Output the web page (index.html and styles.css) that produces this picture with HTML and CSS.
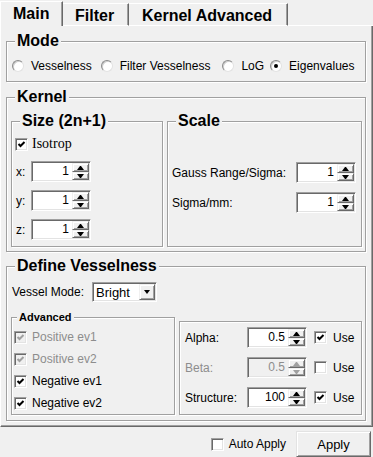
FILE: index.html
```html
<!DOCTYPE html>
<html>
<head>
<meta charset="utf-8">
<link rel="stylesheet" href="styles.css">
</head>
<body>
<div class="tabs">
  <div class="tab active t-main">Main</div>
  <div class="tab t-filter">Filter</div>
  <div class="tab t-kernel">Kernel Advanced</div>
  <div class="tab-fill"></div>
</div>
<div class="pane">
  <div class="group g-mode">
    <div class="gtitle">Mode</div>
    <div class="radios">
      <div class="opt o1"><span class="rb"></span>Vesselness</div>
      <div class="opt o2"><span class="rb"></span>Filter Vesselness</div>
      <div class="opt o3"><span class="rb"></span>LoG</div>
      <div class="opt o4"><span class="rb on"></span>Eigenvalues</div>
    </div>
  </div>

  <div class="group g-kernel">
    <div class="gtitle">Kernel</div>
    <div class="kernel-row">
      <div class="group g-size">
        <div class="gtitle">Size (2n+1)</div>
        <div class="iso-row">
          <span class="cb"><svg width="9" height="9" viewBox="0 0 9 9"><polyline points="1.5,4 3.5,6 7.5,2" fill="none" stroke="#000" stroke-width="2"/></svg></span>
          <span class="serif">Isotrop</span>
        </div>
        <div class="srow first"><span class="xl">x:</span><div class="spin"><span class="val">1</span><span class="btns"><span class="sb up"></span><span class="sb dn"></span></span></div></div>
        <div class="srow"><span class="xl">y:</span><div class="spin"><span class="val">1</span><span class="btns"><span class="sb up"></span><span class="sb dn"></span></span></div></div>
        <div class="srow"><span class="xl">z:</span><div class="spin"><span class="val">1</span><span class="btns"><span class="sb up"></span><span class="sb dn"></span></span></div></div>
      </div>
      <div class="group g-scale">
        <div class="gtitle">Scale</div>
        <div class="scrow first"><span>Gauss Range/Sigma:</span><div class="spin"><span class="val">1</span><span class="btns"><span class="sb up"></span><span class="sb dn"></span></span></div></div>
        <div class="scrow"><span>Sigma/mm:</span><div class="spin"><span class="val">1</span><span class="btns"><span class="sb up"></span><span class="sb dn"></span></span></div></div>
      </div>
    </div>
  </div>

  <div class="group g-vessel">
    <div class="gtitle">Define Vesselness</div>
    <div class="vm-row">
      <span class="vm-label">Vessel Mode:</span>
      <div class="combo"><span class="ctext">Bright</span><span class="cbtn"><span class="tri-dn"></span></span></div>
    </div>
    <div class="vrow">
      <div class="group g-adv">
        <div class="gtitle small">Advanced</div>
        <div class="crow first"><span class="cb dis"><svg width="9" height="9" viewBox="0 0 9 9"><polyline points="1.5,4 3.5,6 7.5,2" fill="none" stroke="#a0a0a0" stroke-width="2"/></svg></span><span class="dtext">Positive ev1</span></div>
        <div class="crow"><span class="cb dis"><svg width="9" height="9" viewBox="0 0 9 9"><polyline points="1.5,4 3.5,6 7.5,2" fill="none" stroke="#a0a0a0" stroke-width="2"/></svg></span><span class="dtext">Positive ev2</span></div>
        <div class="crow"><span class="cb"><svg width="9" height="9" viewBox="0 0 9 9"><polyline points="1.5,4 3.5,6 7.5,2" fill="none" stroke="#000" stroke-width="2"/></svg></span><span>Negative ev1</span></div>
        <div class="crow"><span class="cb"><svg width="9" height="9" viewBox="0 0 9 9"><polyline points="1.5,4 3.5,6 7.5,2" fill="none" stroke="#000" stroke-width="2"/></svg></span><span>Negative ev2</span></div>
      </div>
      <div class="group g-params">
        <div class="prow first">
          <span class="plabel">Alpha:</span>
          <div class="spin"><span class="val">0.5</span><span class="btns"><span class="sb up"></span><span class="sb dn"></span></span></div>
          <span class="cb use"><svg width="9" height="9" viewBox="0 0 9 9"><polyline points="1.5,4 3.5,6 7.5,2" fill="none" stroke="#000" stroke-width="2"/></svg></span><span class="utext">Use</span>
        </div>
        <div class="prow">
          <span class="plabel dtext">Beta:</span>
          <div class="spin dis"><span class="val">0.5</span><span class="btns"><span class="sb up"></span><span class="sb dn"></span></span></div>
          <span class="cb use"></span><span class="utext">Use</span>
        </div>
        <div class="prow">
          <span class="plabel">Structure:</span>
          <div class="spin"><span class="val">100</span><span class="btns"><span class="sb up"></span><span class="sb dn"></span></span></div>
          <span class="cb use"><svg width="9" height="9" viewBox="0 0 9 9"><polyline points="1.5,4 3.5,6 7.5,2" fill="none" stroke="#000" stroke-width="2"/></svg></span><span class="utext">Use</span>
        </div>
      </div>
    </div>
  </div>
</div>
<div class="bottom">
  <span class="cb"></span><span class="auto">Auto Apply</span>
  <div class="btn">Apply</div>
</div>
</body>
</html>
```

FILE: styles.css
```css
* { box-sizing: border-box; }
html, body { margin: 0; padding: 0; }
body {
  width: 373px;
  height: 457px;
  overflow: hidden;
  background: #f0f0f0;
  font-family: "Liberation Sans", Arial, sans-serif;
  font-size: 12px;
  color: #000;
}

/* tabs */
.tabs { display: flex; height: 26px; }
.tab {
  height: 23px;
  margin-top: 3px;
  padding-top: 3px;
  font-weight: bold;
  font-size: 16px;
  line-height: 18px;
  white-space: nowrap;
  border-top: 1px solid #fff;
  border-right: 1px solid #696969;
  border-bottom: 1px solid #fff;
  box-shadow: inset -1px 0 0 #a0a0a0;
}
.tab.active {
  height: 25px;
  margin-top: 1px;
  padding-top: 3px;
  border-left: 1px solid #fff;
  border-bottom: none;
}
.t-main { width: 63px; padding-left: 12px; }
.t-filter { width: 66px; padding-left: 12px; }
.t-kernel { width: 159px; padding-left: 13px; }
.tab-fill { flex: 1; border-bottom: 1px solid #fff; }

/* pane */
.pane {
  display: flow-root;
  height: 401px;
  padding: 0 6px 0 5px;
  border-left: 1px solid #fff;
  border-right: 1px solid #696969;
  border-bottom: 1px solid #696969;
  box-shadow: inset -1px -1px 0 #a0a0a0;
}

/* group boxes */
.group {
  display: flow-root;
  border: 1px solid #a0a0a0;
  box-shadow: inset 1px 1px 0 #fff, 1px 1px 0 #fff;
}
.gtitle {
  width: fit-content;
  margin: -10px 0 0 8px;
  padding: 0 2px;
  background: #f0f0f0;
  font-weight: bold;
  font-size: 16px;
  line-height: 18px;
  white-space: nowrap;
}
.gtitle.small {
  margin: -7px 0 0 5px;
  font-size: 11px;
  line-height: 13px;
}

/* mode */
.g-mode { margin-top: 15px; height: 41px; }
.radios { display: flex; align-items: center; height: 16px; margin: 8px 0 0 5px; }
.opt { display: flex; align-items: center; white-space: nowrap; }
.o1 { margin-right: 9px; }
.o2 { margin-right: 12px; }
.o3 { margin-right: 6px; }
.rb {
  flex: none;
  display: flex;
  align-items: center;
  justify-content: center;
  width: 12px;
  height: 12px;
  margin-right: 7px;
  border-radius: 50%;
  background: #fff;
  border: 1px solid;
  border-color: #8a8a8a #e2e2e2 #e2e2e2 #8a8a8a;
  box-shadow: inset 1px 1px 0 #cfcfcf;
}
.rb.on::after {
  content: "";
  width: 4px;
  height: 4px;
  border-radius: 50%;
  background: #000;
}

/* checkbox */
.cb {
  flex: none;
  display: flex;
  align-items: center;
  justify-content: center;
  width: 13px;
  height: 13px;
  background: #fff;
  border: 1px solid;
  border-color: #a0a0a0 #fff #fff #a0a0a0;
  box-shadow: inset 1px 1px 0 #696969, inset -1px -1px 0 #e3e3e3;
}
.cb svg { display: block; }
.cb.dis { background: #f0f0f0; }
.dtext { color: #8d8d8d; }

/* kernel */
.g-kernel { margin-top: 15px; height: 155px; }
.kernel-row { display: flex; gap: 4px; margin: 15px 3px 0 4px; }
.g-size { width: 152px; height: 126px; }
.g-scale { width: 195px; height: 126px; }
.iso-row { display: flex; align-items: center; height: 16px; margin: 6px 0 0 3px; }
.serif { margin-left: 4px; font-family: "Liberation Serif", "Times New Roman", serif; font-size: 14px; }
.srow { display: flex; align-items: center; height: 21px; margin: 8px 0 0 4px; }
.srow.first { margin-top: 9px; }
.xl { width: 15px; }
.scrow { display: flex; align-items: center; justify-content: space-between; height: 21px; margin: 9px 5px 0 4px; }
.scrow.first { margin-top: 32px; }

/* spin box */
.spin {
  flex: none;
  display: flex;
  width: 60px;
  height: 21px;
  padding: 1px;
  background: #fff;
  border: 1px solid;
  border-color: #a0a0a0 #fff #fff #a0a0a0;
  box-shadow: inset 1px 1px 0 #696969, inset -1px -1px 0 #e3e3e3;
}
.spin .val { flex: 1; text-align: right; padding-right: 3px; line-height: 17px; }
.spin .btns { width: 17px; display: flex; flex-direction: column; }
.sb {
  display: flex;
  align-items: center;
  justify-content: center;
  background: #f0f0f0;
  border: 1px solid;
  border-color: #f0f0f0 #696969 #696969 #f0f0f0;
  box-shadow: inset 1px 1px 0 #fff, inset -1px -1px 0 #a0a0a0;
}
.sb.up { height: 9px; }
.sb.dn { height: 8px; }
.sb.up::after {
  content: "";
  width: 1px;
  height: 0;
  border-left: 3px solid transparent;
  border-right: 3px solid transparent;
  border-bottom: 4px solid #000;
}
.sb.dn::after {
  content: "";
  width: 1px;
  height: 0;
  border-left: 3px solid transparent;
  border-right: 3px solid transparent;
  border-top: 4px solid #000;
}
.spin.dis { background: #f0f0f0; }
.spin.dis .val { color: #8d8d8d; }
.spin.dis .sb.up::after { border-bottom-color: #a0a0a0; }
.spin.dis .sb.dn::after { border-top-color: #a0a0a0; }

/* define vesselness */
.g-vessel { margin-top: 14px; height: 155px; }
.vm-row { display: flex; align-items: center; height: 20px; margin: 7px 0 0 5px; }
.vm-label { width: 80px; }
.combo {
  display: flex;
  align-items: center;
  width: 65px;
  height: 20px;
  padding: 1px;
  background: #fff;
  border: 1px solid;
  border-color: #a0a0a0 #fff #fff #a0a0a0;
  box-shadow: inset 1px 1px 0 #696969, inset -1px -1px 0 #e3e3e3;
}
.ctext { flex: 1; padding-left: 2px; font-size: 13px; }
.cbtn {
  display: flex;
  align-items: center;
  justify-content: center;
  width: 16px;
  height: 16px;
  background: #f0f0f0;
  border: 1px solid;
  border-color: #f0f0f0 #696969 #696969 #f0f0f0;
  box-shadow: inset 1px 1px 0 #fff, inset -1px -1px 0 #a0a0a0;
}
.tri-dn {
  width: 1px;
  height: 0;
  border-left: 3px solid transparent;
  border-right: 3px solid transparent;
  border-top: 4px solid #000;
}
.vrow { display: flex; align-items: flex-start; gap: 4px; margin: 15px 3px 0 4px; }
.g-adv { width: 164px; height: 98px; }
.g-params { width: 183px; height: 94px; margin-top: 4px; }
.crow { display: flex; align-items: center; height: 22px; padding-left: 2px; }
.crow.first { margin-top: 2px; }
.crow .cb { margin-right: 5px; }
.prow { display: flex; align-items: center; height: 21px; margin: 9px 0 0 5px; }
.prow.first { margin-top: 5px; }
.plabel { width: 62px; }
.cb.use { margin-left: 7px; }
.utext { margin-left: 6px; }

/* bottom bar */
.bottom {
  display: flex;
  align-items: center;
  justify-content: flex-end;
  height: 30px;
  padding-top: 4px;
}
.auto { margin-left: 5px; margin-right: 10px; }
.btn {
  width: 75px;
  height: 26px;
  margin-right: 2px;
  display: flex;
  align-items: center;
  justify-content: center;
  border: 1px solid;
  border-color: #e3e3e3 #696969 #696969 #e3e3e3;
  box-shadow: inset 1px 1px 0 #fff, inset -1px -1px 0 #a0a0a0;
  font-size: 13px;
}
```
